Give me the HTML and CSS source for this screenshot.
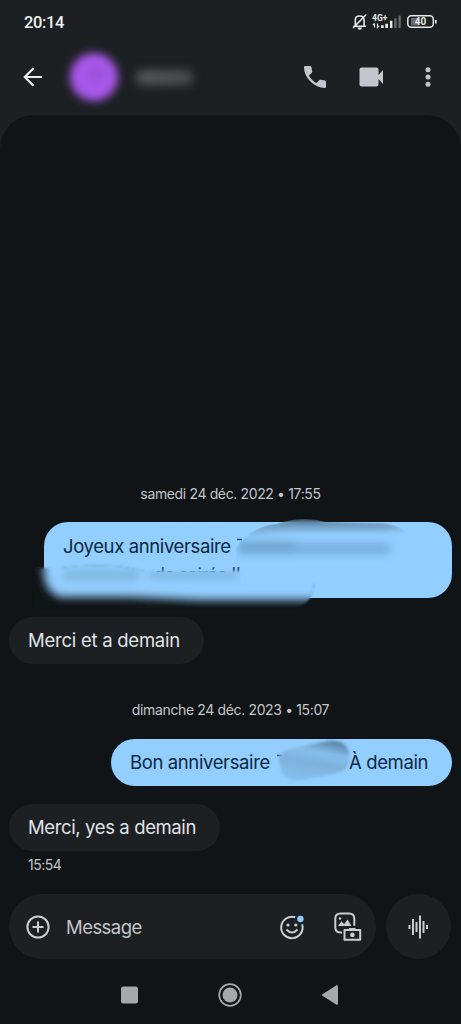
FILE: index.html
```html
<!DOCTYPE html>
<html lang="fr">
<head>
<meta charset="utf-8">
<title>Messages</title>
<link rel="stylesheet" href="styles.css">
</head>
<body>
<div class="phone">
  <header class="top">
    <div class="status">
      <span class="clock">20:14</span>
      <svg class="status-icons" width="90" height="20" viewBox="350 12 90 20">
        <g fill="none" stroke="#e6e8ea" stroke-width="1.6" stroke-linecap="round" stroke-linejoin="round">
          <path d="M354 26.3h11.5M355.300 25.500v-5.500c0-5 8.500-5.500 8.800 0v5.500M353.500 27.500L365.800 15"/>
        </g>
        <path d="M357.500 27.500h4.500a2.200 2.200 0 0 1-4.500 0z" fill="#e6e8ea"/>
        <text class="network" x="372" y="21" textLength="15.500" lengthAdjust="spacingAndGlyphs">4G+</text>
        <path d="M374.500 23.500v4M373 25.200l1.500-1.700M377.500 23.500v4l1.500-1.700" stroke="#e6e8ea" stroke-width="1.200" fill="none"/>
        <path d="M381 25.300h2.700v2.700h-2.700zM385.300 23.700h2.700v4.300h-2.700zM390 20.800h2.400v7.200h-2.400z" fill="#e6e8ea"/>
        <path d="M394.300 18.200h2.300v9.800h-2.300zM398.500 15.700h2.300v12.300h-2.300z" fill="#676b6e"/>
        <rect x="411" y="18" width="8" height="7.500" fill="#676b6e"/>
        <rect x="407.800" y="15.800" width="25.500" height="11.500" rx="3.500" fill="none" stroke="#e6e8ea" stroke-width="1.500"/>
        <path d="M435.800 20v3.500" stroke="#e6e8ea" stroke-width="1.700"/>
        <text class="battery" x="420.500" y="25.200" text-anchor="middle">40</text>
      </svg>
    </div>
    <div class="appbar">
      <svg class="back" width="20" height="20" viewBox="0 0 20 20"><path d="M19 10H2M10.500 1.300L1.800 10l8.700 8.700" fill="none" stroke="#edf0f2" stroke-width="2.200"/></svg>
      <span class="avatar"></span>
      <span class="contact"></span>
      <svg class="call" width="22" height="22" viewBox="3 3 18 18"><path fill="#c2c7cf" d="M19.950 21q-3.125 0-6.175-1.363t-5.550-3.862-3.863-5.550T3 4.050q0-.450.300-.75t.750-.300H8.100q.350 0 .625.238t.325.562l.650 3.500q.050.400-.025.675T9.400 8.450L6.975 10.900q.500.925 1.188 1.787t1.512 1.663q.775.775 1.625 1.438T13.100 17l2.350-2.350q.225-.225.588-.338t.712-.062l3.450.700q.350.100.575.363T21 15.900v4.050q0 .450-.300.750t-.750.300z"/></svg>
      <svg class="video" width="25" height="20" viewBox="0 0 25 20"><path d="M2.500.5h15a2 2 0 0 1 2 2V8L24 3v14l-4.500-5v5.500a2 2 0 0 1-2 2h-15a2 2 0 0 1-2-2v-15a2 2 0 0 1 2-2z" fill="#c2c7cf"/></svg>
      <svg class="more" width="6" height="20" viewBox="0 0 6 20" fill="#c2c7cf"><circle cx="3" cy="2.800" r="2.500"/><circle cx="3" cy="10" r="2.500"/><circle cx="3" cy="17.200" r="2.500"/></svg>
    </div>
  </header>
  <main class="thread">
    <div class="date first"><span class="d1">samedi 24 déc. 2022 • 17:55</span></div>
    <div class="bubble sent long">
      <span class="line t1">Joyeux anniversaire</span>
      <span class="line second">de soirée !!</span>
      <svg class="smudge" width="461" height="110" viewBox="0 505 461 110">
        <defs>
          <filter id="soft" x="-20%" y="-60%" width="140%" height="220%"><feGaussianBlur stdDeviation="4"/></filter>
          <filter id="fine" x="-20%" y="-50%" width="140%" height="200%"><feGaussianBlur stdDeviation="2"/></filter>
          <filter id="hair" x="-5%" y="-20%" width="110%" height="140%"><feGaussianBlur stdDeviation="1"/></filter>
          <linearGradient id="arch" x1="0" y1="0" x2="0" y2="1"><stop offset="0" stop-color="#40596f"/><stop offset=".35" stop-color="#76a5cc"/><stop offset="1" stop-color="#92ceff"/></linearGradient>
          <clipPath id="archclip"><path d="M236 560V548Q248 528 276 524Q303 515 326 522L384 523Q400 525 408 534L400 565H236z"/></clipPath>
          <clipPath id="baseclip"><path d="M34 568H60Q110 562 145 571H241V582H314Q313 605 295 607H34z"/></clipPath>
        </defs>
        <path d="M237 539.500h5" stroke="#314b62" stroke-width="1.500"/>
        <g clip-path="url(#archclip)">
          <path d="M244 540Q253 523 280 522Q305 516 326 521L384 523Q396 524 406 532Q395 529 382 532L300 532Q255 532 244 540z" fill="url(#arch)" filter="url(#fine)"/>
          <g fill="#6fa6d1" filter="url(#soft)"><rect x="238" y="541" width="56" height="13"/><rect x="290" y="543" width="100" height="11" opacity=".8"/></g>
        </g>
        <g filter="url(#hair)">
          <g clip-path="url(#baseclip)">
            <rect x="34" y="560" width="280" height="50" fill="#101417"/>
            <path d="M44 545H340V600H200L130 597H60Q46 592 44 575z" fill="#92ceff" filter="url(#soft)"/>
            <path d="M64 570H139V580H64zM149 571H238V579H149z" fill="#7fb5df" filter="url(#soft)"/>
          </g>
        </g>
      </svg>
    </div>
    <div class="bubble received one"><span class="line t2">Merci et a demain</span></div>
    <div class="date second-date"><span class="d2">dimanche 24 déc. 2023 • 15:07</span></div>
    <div class="bubble sent short">
      <span class="line t3">Bon anniversaire</span><span class="line t4">À demain</span>
      <svg class="name-smudge" width="80" height="47" viewBox="275 739 80 47">
        <defs><linearGradient id="blob" x1=".3" y1="1" x2=".65" y2="0"><stop offset="0" stop-color="#86bfec"/><stop offset=".45" stop-color="#7db2dc"/><stop offset=".72" stop-color="#86beeb"/><stop offset="1" stop-color="#5d87aa"/></linearGradient><filter id="edge"><feGaussianBlur stdDeviation="1.500"/></filter></defs>
        <path d="M277 755.500h5" stroke="#314b62" stroke-width="1.500"/>
        <path d="M279 760Q277 752 294 748L328 741Q345 739 349 752Q351 766 342 771Q330 776 310 778Q292 784 284 776Q280 770 279 760z" fill="url(#blob)" filter="url(#edge)"/>
      </svg>
    </div>
    <div class="bubble received two"><span class="line t5">Merci, yes a demain</span></div>
    <div class="sent-time">15:54</div>
  </main>
  <div class="composer">
    <div class="field">
      <svg width="24" height="24" viewBox="0 0 24 24" fill="none" stroke="#c9ced3" stroke-width="2"><circle cx="12" cy="12" r="10.600"/><path d="M12 6.500v11M6.500 12h11"/></svg>
      <span class="placeholder">Message</span>
      <svg class="emoji" width="26" height="28" viewBox="279 912 26 28"><path d="M295.200 916.300a10.700 10.700 0 1 0 6.900 7" fill="none" stroke="#c9ced3" stroke-width="2"/><circle cx="288" cy="924" r="1.600" fill="#c9ced3"/><circle cx="295.800" cy="924" r="1.600" fill="#c9ced3"/><path d="M286.500 928.500q5.500 6 11 0" fill="none" stroke="#c9ced3" stroke-width="1.900"/><circle cx="300.400" cy="918" r="3.200" fill="#8ecaff"/></svg>
      <svg class="gallery" width="28" height="30" viewBox="334 912 28 30"><path d="M342 932.500h-1.500q-5.200 0-5.200-5.200v-8.600q0-5.200 5.200-5.200h8.600q5.200 0 5.200 5.200v7" fill="none" stroke="#c9ced3" stroke-width="2"/><circle cx="340" cy="918.500" r="1.200" fill="#c9ced3"/><path d="M338 926l3.500-4.700 2.600 3 3.400-4.700 4 6.400z" fill="#c9ced3"/><path d="M344.500 930h15.700v9.800h-15.700z" fill="#1c2023" stroke="#c9ced3" stroke-width="2" stroke-linejoin="round"/><path d="M349 928h6.500v2h-6.500z" fill="#c9ced3"/><circle cx="352.400" cy="934.900" r="2.300" fill="#c9ced3"/></svg>
    </div>
    <div class="voice"><svg width="22" height="26" viewBox="0 0 22 26" fill="none" stroke="#c9ced3" stroke-width="2"><path d="M1.500 11v4M5 5v16M8.500 8v10M12 1.500v23M15.500 7v12M19 11v4"/></svg></div>
  </div>
  <nav class="system-nav">
    <svg width="219" height="24" viewBox="0 0 219 24"><rect x="0" y="3.500" width="17" height="17" rx="2.500" fill="#a5a9ac"/><circle cx="109" cy="12" r="10.800" fill="none" stroke="#a5a9ac" stroke-width="1.700"/><circle cx="109" cy="12" r="7.500" fill="#a5a9ac"/><path d="M202 12L216 3.200V20.800z" fill="#a5a9ac" stroke="#a5a9ac" stroke-width="2" stroke-linejoin="round"/></svg>
  </nav>
</div>
</body>
</html>
```
FILE: styles.css
```css
* { box-sizing: border-box; }
body { margin: 0; background: #101417; font-family: Inter, Roboto, sans-serif; }
svg { display: block; flex: none; }
.phone { width: 461px; height: 1024px; overflow: hidden; display: flex; flex-direction: column; background: #1c2023; }
.top { height: 115px; flex: none; }
.status { height: 42px; padding: 12px 21px 0 24px; display: flex; justify-content: space-between; }
.clock { font: 500 16.500px/21px Roboto, sans-serif; color: #edf0f2; letter-spacing: -.4px; }
.network { font: 700 9px Roboto, sans-serif; fill: #e6e8ea; }
.battery { font: 700 10px Roboto, sans-serif; fill: #e6e8ea; }
.appbar { height: 70px; padding-left: 23px; display: flex; align-items: center; }
.avatar { width: 48px; height: 48px; margin-left: 27px; border-radius: 50%; background: radial-gradient(circle at 55% 45%, #964dd0 0, #a958ea 30%); filter: blur(4px); }
.contact { width: 57px; height: 15px; margin-left: 18px; border-radius: 7px; background: linear-gradient(90deg, #55585b, #484c4f); filter: blur(5px); }
.call { margin-left: 111px; }
.video { margin-left: 33px; }
.more { margin-left: 41px; }
.thread { height: 779px; flex: none; padding: 370px 9px 0; border-radius: 34px 34px 0 0; background: #101417; display: flex; flex-direction: column; }
.date { text-align: center; color: #c2c6ca; font-size: 14px; line-height: 18px; white-space: nowrap; }
.bubble { position: relative; border-radius: 24px; display: flex; font-size: 18.500px; line-height: 28px; white-space: nowrap; }
.sent { align-self: flex-end; background: #92ceff; color: #0c2940; }
.received { align-self: flex-start; background: #1c2023; color: #e1e4e7; }
.long { width: 408px; height: 76px; margin-top: 19px; padding: 10px 19px; flex-direction: column; }
.second { margin-left: 91px; padding-top: 1px; font-size: 18px; letter-spacing: -.65px; color: #2c4d69; }
.smudge { position: absolute; left: -44px; top: -17px; }
.one { width: 195px; height: 47px; margin-top: 19px; padding: 9px 19px; }
.second-date { margin-top: 37px; }
.short { width: 341px; height: 47px; margin-top: 20px; padding: 9px 24px 9px 19px; justify-content: space-between; }
.name-smudge { position: absolute; left: 164px; top: 0; }
.two { width: 211px; height: 47px; margin-top: 18px; padding: 9px 19px; }
.sent-time { margin: 5px 0 0 19px; color: #c2c6ca; font-size: 14px; line-height: 18px; letter-spacing: -.5px; }
.composer { height: 65px; flex: none; padding-left: 9px; display: flex; gap: 10px; background: #101417; }
.field { width: 367px; height: 65px; border-radius: 33px; background: #1c2023; padding-left: 17px; display: flex; align-items: center; }
.placeholder { width: 229px; padding-left: 16px; color: #c2c6ca; font-size: 18.500px; letter-spacing: -.55px; }
.gallery { margin-left: 29px; }
.voice { width: 65px; height: 65px; border-radius: 50%; background: #1c2023; display: flex; align-items: center; justify-content: center; }
.system-nav { height: 65px; padding: 24px 0 0 121px; background: #101417; }
.t1, .t3, .t5 { letter-spacing: -.38px; }
.t2 { letter-spacing: -.25px; }
.t4 { letter-spacing: -.4px; }
.d1, .d2 { letter-spacing: -.36px; }
```
